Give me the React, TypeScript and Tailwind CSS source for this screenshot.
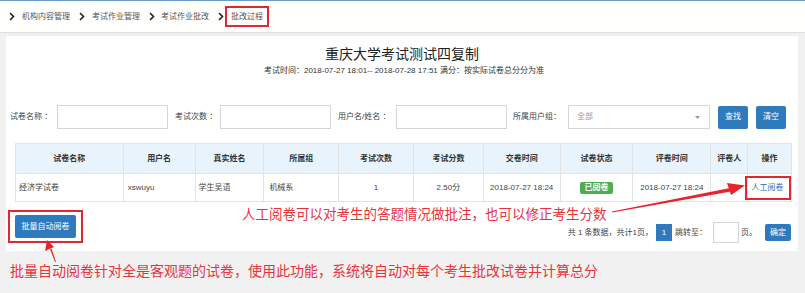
import React from "react";

const Chevron = () => (
  <svg width="6" height="9" viewBox="0 0 6 9" className="shrink-0">
    <path d="M1 1 L4.5 4.5 L1 8" fill="none" stroke="#222" strokeWidth="1.6" />
  </svg>
);

const cols = [
  { t: "试卷名称", w: 107 },
  { t: "用户名", w: 72 },
  { t: "真实姓名", w: 69 },
  { t: "所属组", w: 75 },
  { t: "考试次数", w: 75 },
  { t: "考试分数", w: 70 },
  { t: "交卷时间", w: 77 },
  { t: "试卷状态", w: 73 },
  { t: "评卷时间", w: 78 },
  { t: "评卷人", w: 37 },
  { t: "操作", w: 44 },
];

export default function App() {
  return (
    <div
      className="relative w-[805px] h-[293px] overflow-hidden bg-[#f1f1f1] text-[#333]"
      style={{ fontFamily: '"Liberation Sans", "Noto Sans CJK SC", sans-serif' }}
    >
      <div className="h-px bg-[#6b9bc8]" />
      {/* breadcrumb */}
      <div className="h-[32px] bg-[#fffffd] border-b border-[#dedede] flex items-center pl-[9px] text-[8px] text-[#555]">
        <Chevron />
        <span className="ml-[7px]">机构内容管理</span>
        <span className="ml-[9px]"><Chevron /></span>
        <span className="ml-[7px]">考试作业管理</span>
        <span className="ml-[9px]"><Chevron /></span>
        <span className="ml-[6px]">考试作业批改</span>
        <span className="ml-[9px]"><Chevron /></span>
        <span className="ml-[1px] border-2 border-[#e0282e] h-[21px] px-[4px] flex items-center">批改过程</span>
      </div>

      {/* panel */}
      <div className="ml-[6px] mt-[3px] w-[792px] h-[215px] bg-white flex flex-col">
        <div className="pt-[9px] text-center">
          <div className="text-[14px] leading-[18px] text-[#222]">重庆大学考试测试四复制</div>
          <div className="text-[8px] leading-[10px] mt-[3px] text-[#333] pl-[4px]">
            考试时间：2018-07-27 18:01-- 2018-07-28 17:51 满分：按实际试卷总分分为准
          </div>
        </div>

        {/* search */}
        <div className="mt-[29px] flex items-center text-[8px] text-[#444]">
          <span className="w-[51px] pl-[4px]">试卷名称 ：</span>
          <div className="w-[111px] h-[24px] border border-[#d5d5d5]" />
          <span className="w-[52px] pl-[7px]">考试次数 ：</span>
          <div className="w-[111px] h-[24px] border border-[#d5d5d5]" />
          <span className="w-[65px] pl-[7px]">用户名/姓名 ：</span>
          <div className="w-[111px] h-[24px] border border-[#d5d5d5]" />
          <span className="w-[61px] pl-[6px]">所属用户组：</span>
          <div className="w-[142px] h-[24px] border border-[#d5d5d5] flex items-center justify-between pl-[8px] pr-[9px] text-[#999]">
            <span>全部</span>
            <svg width="5" height="3" viewBox="0 0 5 3"><path d="M0 0 H5 L2.5 3 Z" fill="#999" /></svg>
          </div>
          <div className="ml-[8px] w-[30px] h-[23px] bg-[#2f79bd] rounded-[2px] text-white flex items-center justify-center">查找</div>
          <div className="ml-[8px] w-[30px] h-[23px] bg-[#2f79bd] rounded-[2px] text-white flex items-center justify-center">清空</div>
        </div>

        {/* table */}
        <div className="ml-[9px] mt-[14px] w-[777px] border border-[#e3e3e3] text-[8px]">
          <div className="flex h-[30px] bg-[#e9f3fc] border-b border-[#e3e3e3] text-[#333] font-bold">
            {cols.map((c, i) => (
              <div
                key={c.t}
                className={`flex items-center justify-center ${i > 0 ? "border-l border-[#e3e3e3]" : ""}`}
                style={{ width: c.w }}
              >
                {c.t}
              </div>
            ))}
          </div>
          <div className="flex h-[27px] text-[#444]">
            <div className="w-[107px] flex items-center pl-[3px]">经济学试卷</div>
            <div className="w-[72px] flex items-center pl-[4px] border-l border-[#e3e3e3]">xswuyu</div>
            <div className="w-[69px] flex items-center pl-[3px] border-l border-[#e3e3e3]">学生吴语</div>
            <div className="w-[75px] flex items-center pl-[5px] border-l border-[#e3e3e3]">机械系</div>
            <div className="w-[75px] flex items-center justify-center border-l border-[#e3e3e3]">1</div>
            <div className="w-[70px] flex items-center justify-center border-l border-[#e3e3e3]">2.50分</div>
            <div className="w-[77px] flex items-center justify-center border-l border-[#e3e3e3]">2018-07-27 18:24</div>
            <div className="w-[73px] flex items-center justify-center border-l border-[#e3e3e3]">
              <span className="w-[33px] h-[12px] bg-[#4cae4c] text-white rounded-[2px] flex items-center justify-center font-bold">已阅卷</span>
            </div>
            <div className="w-[78px] flex items-center justify-center border-l border-[#e3e3e3]">2018-07-27 18:24</div>
            <div className="w-[37px] border-l border-[#e3e3e3]" />
            <div className="w-[44px] flex items-center justify-center border-l border-[#e3e3e3]">
              <span className="w-[46px] h-[24px] -ml-[4px] border-2 border-[#e0282e] text-[#2f6db5] flex items-center justify-center">人工阅卷</span>
            </div>
          </div>
        </div>

        {/* bottom row */}
        <div className="mt-[8px] flex items-start">
          <div className="ml-[2px] border-2 border-[#e0282e] px-[5px] py-[3px]">
            <div className="w-[61px] h-[23px] bg-[#2f79bd] rounded-[2px] text-white text-[8px] flex items-center justify-center">批量自动阅卷</div>
          </div>
          <div className="ml-auto mr-[7px] mt-[12px] flex items-center text-[8px] text-[#444]">
            <span>共 1 条数据，共计1页，</span>
            <span className="ml-[3px] w-[16px] h-[17px] bg-[#2f79bd] text-white flex items-center justify-center">1</span>
            <span className="ml-[3px]">跳转至：</span>
            <div className="ml-[6px] w-[26px] h-[21px] border border-[#d5d5d5]" />
            <span className="ml-[2px]">页。</span>
            <span className="ml-[8px] w-[26px] h-[17px] bg-[#2f79bd] text-white rounded-[2px] flex items-center justify-center">确定</span>
          </div>
        </div>
      </div>

      <div className="ml-[10px] mt-[10px] text-[14px] leading-[18px] text-[#e8333c]" style={{ fontFamily: '"Noto Sans CJK SC", sans-serif' }}>
        批量自动阅卷针对全是客观题的试卷，使用此功能，系统将自动对每个考生批改试卷并计算总分
      </div>

      {/* annotation overlay */}
      <div
        className="absolute left-[242px] top-[204px] text-[13.5px] leading-[18px] text-[#e8333c]"
        style={{ fontFamily: '"Noto Sans CJK SC", sans-serif' }}
      >
        人工阅卷可以对考生的答题情况做批注，也可以修正考生分数
      </div>
      <svg className="absolute left-0 top-0 pointer-events-none" width="805" height="293">
        <polygon points="612,211.5 730,188 731,191.5 612,212.5" fill="#e8232b" />
        <polygon points="745,185.5 727,183 731,195" fill="#e8232b" />
        <polygon points="55,262 50,249 51.5,248.5 56,262" fill="#e8232b" />
        <polygon points="47,240 45,251 54,247" fill="#e8232b" />
      </svg>
    </div>
  );
}
